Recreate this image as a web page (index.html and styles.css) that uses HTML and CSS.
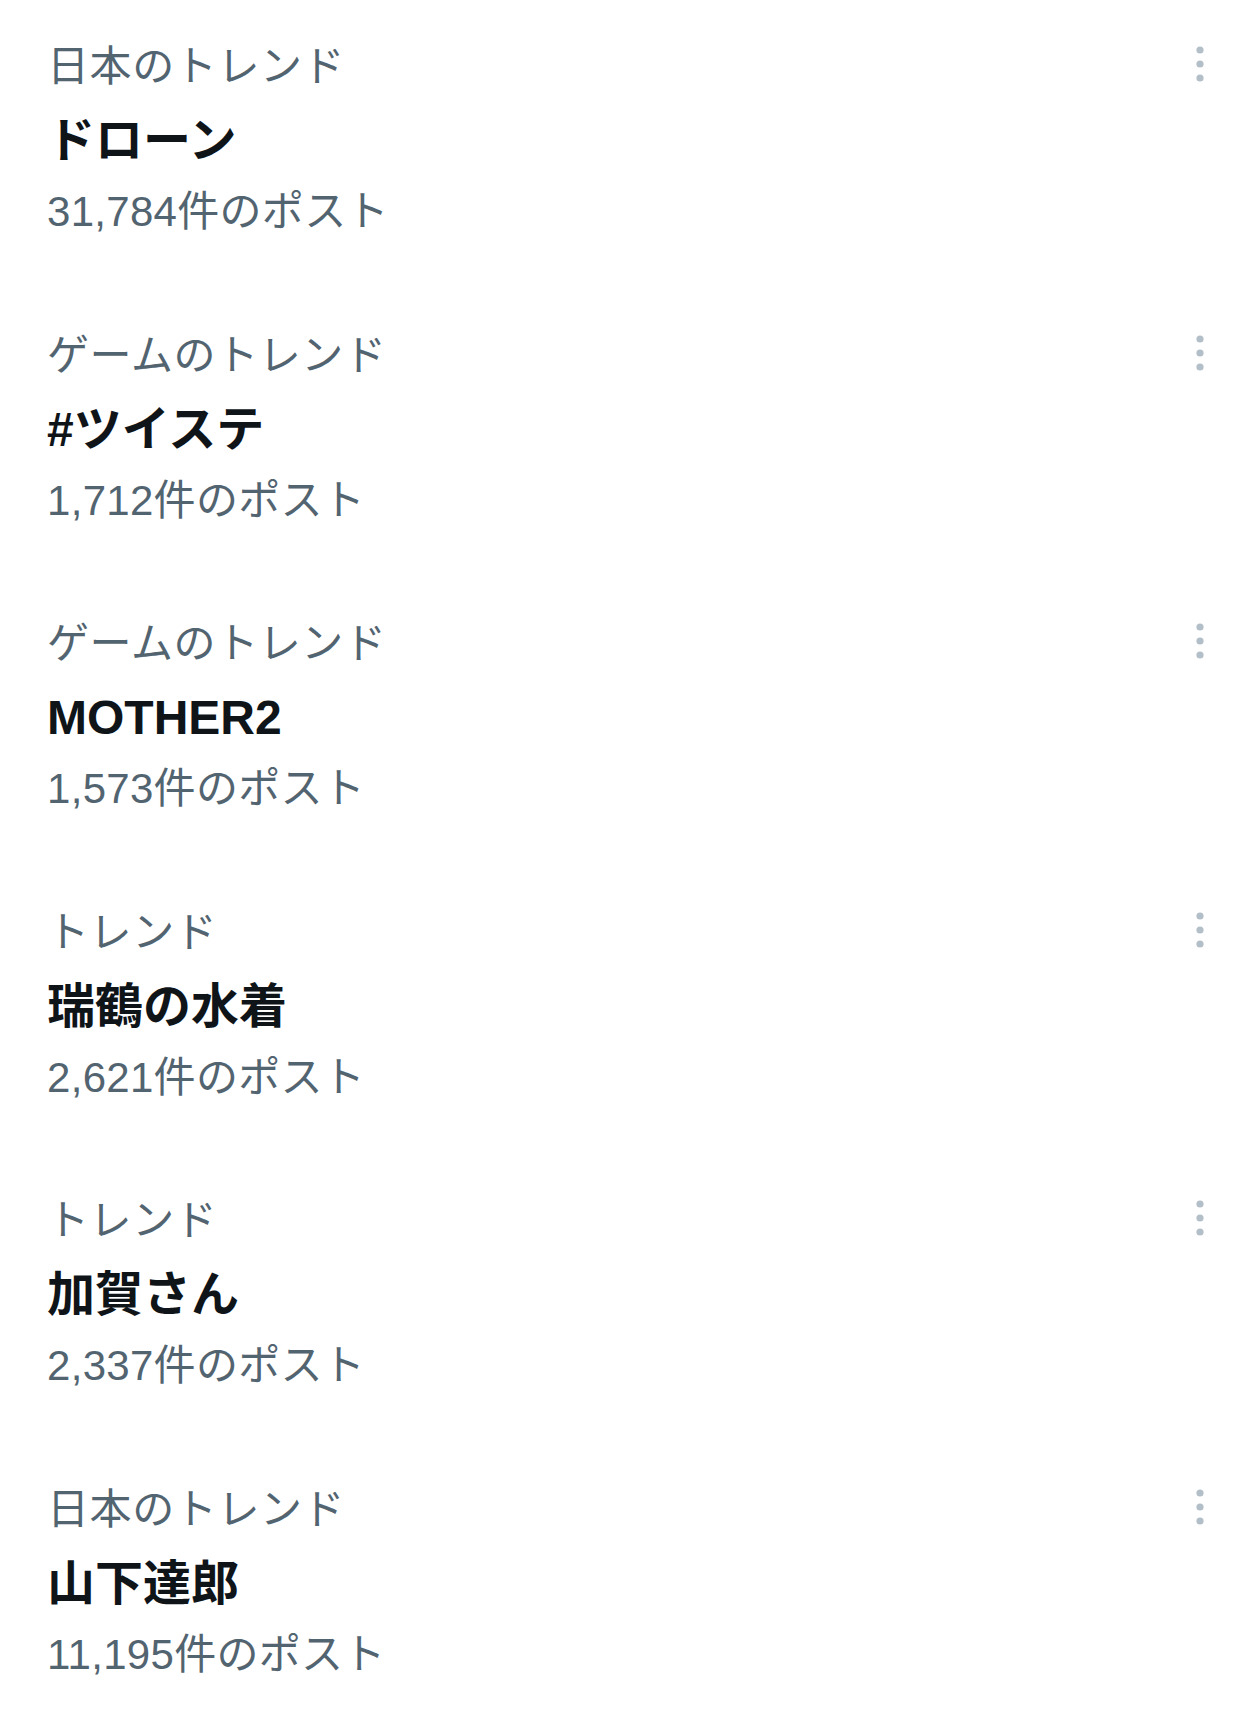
FILE: index.html
```html
<!DOCTYPE html>
<html>
<head>
  <title>トレンド</title>
  <meta name="viewport" content="width=device-width,initial-scale=1.0">
  <link rel="stylesheet" href="styles.css">
</head>
<body>

  <div class="trends">

    <div class="trend">
      <div class="trend-text">
        <p class="category">日本のトレンド</p>
        <p class="title">ドローン</p>
        <p class="count">31,784件のポスト</p>
      </div>
      <div class="more">
        <svg width="36" height="36" viewBox="0 0 36 36"><circle cx="18" cy="4" r="3.6"/><circle cx="18" cy="18" r="3.6"/><circle cx="18" cy="32" r="3.6"/></svg>
      </div>
    </div>

    <div class="trend">
      <div class="trend-text">
        <p class="category">ゲームのトレンド</p>
        <p class="title">#ツイステ</p>
        <p class="count">1,712件のポスト</p>
      </div>
      <div class="more">
        <svg width="36" height="36" viewBox="0 0 36 36"><circle cx="18" cy="4" r="3.6"/><circle cx="18" cy="18" r="3.6"/><circle cx="18" cy="32" r="3.6"/></svg>
      </div>
    </div>

    <div class="trend">
      <div class="trend-text">
        <p class="category">ゲームのトレンド</p>
        <p class="title">MOTHER2</p>
        <p class="count">1,573件のポスト</p>
      </div>
      <div class="more">
        <svg width="36" height="36" viewBox="0 0 36 36"><circle cx="18" cy="4" r="3.6"/><circle cx="18" cy="18" r="3.6"/><circle cx="18" cy="32" r="3.6"/></svg>
      </div>
    </div>

    <div class="trend">
      <div class="trend-text">
        <p class="category">トレンド</p>
        <p class="title">瑞鶴の水着</p>
        <p class="count">2,621件のポスト</p>
      </div>
      <div class="more">
        <svg width="36" height="36" viewBox="0 0 36 36"><circle cx="18" cy="4" r="3.6"/><circle cx="18" cy="18" r="3.6"/><circle cx="18" cy="32" r="3.6"/></svg>
      </div>
    </div>

    <div class="trend">
      <div class="trend-text">
        <p class="category">トレンド</p>
        <p class="title">加賀さん</p>
        <p class="count">2,337件のポスト</p>
      </div>
      <div class="more">
        <svg width="36" height="36" viewBox="0 0 36 36"><circle cx="18" cy="4" r="3.6"/><circle cx="18" cy="18" r="3.6"/><circle cx="18" cy="32" r="3.6"/></svg>
      </div>
    </div>

    <div class="trend">
      <div class="trend-text">
        <p class="category">日本のトレンド</p>
        <p class="title">山下達郎</p>
        <p class="count">11,195件のポスト</p>
      </div>
      <div class="more">
        <svg width="36" height="36" viewBox="0 0 36 36"><circle cx="18" cy="4" r="3.6"/><circle cx="18" cy="18" r="3.6"/><circle cx="18" cy="32" r="3.6"/></svg>
      </div>
    </div>

  </div>

</body>
</html>
```

FILE: styles.css
```css
  body{
    margin: 0;
    background-color: #fff;
    font-family: "Liberation Sans", "Noto Sans CJK JP", sans-serif;
  }

  .trends{
    display: flex;
    flex-direction: column;
  }

  .trend{
    display: flex;
    align-items: flex-start;
    justify-content: space-between;
    padding: 30px 42px 39.5px 47px;
  }

  .trend-text p{
    margin: 0;
    line-height: 74px;
    white-space: nowrap;
  }

  .category{
    font-size: 42px;
    letter-spacing: 0.6px;
    color: #536471;
  }

  .title{
    font-size: 48px;
    font-weight: 700;
    color: #0f1419;
  }

  .trend-text .count{
    font-size: 42px;
    letter-spacing: 0.3px;
    color: #536471;
    margin-top: -3px;
  }

  .more{
    height: 74px;
    margin-top: -3px;
    display: flex;
    align-items: center;
  }

  .more svg{
    fill: #b3bfc8;
    display: block;
  }
```
